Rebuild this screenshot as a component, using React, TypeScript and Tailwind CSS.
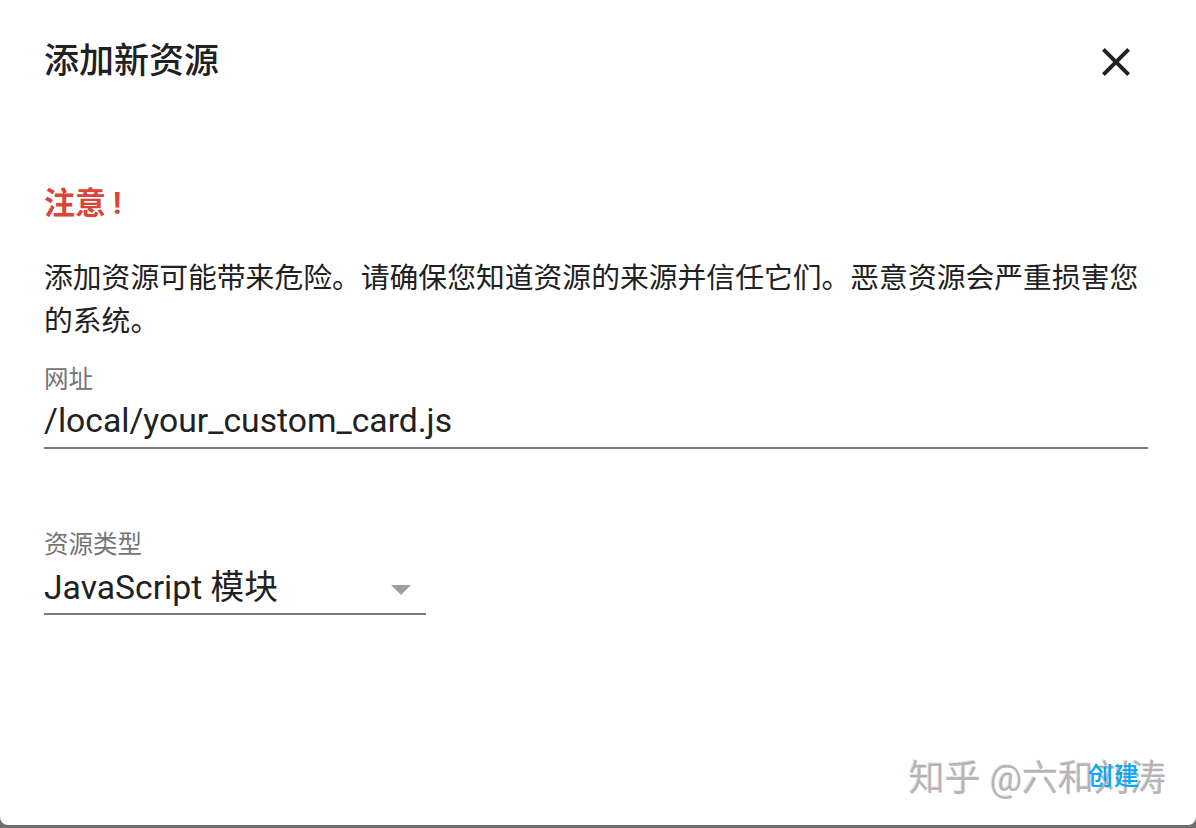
import React from 'react'

const FONT = 'font-[Roboto,"Noto_Sans_CJK_SC",sans-serif]'

function CloseIcon() {
  return (
    <svg width="48" height="48" viewBox="0 0 24 24" fill="#212121">
      <path d="M19 6.41L17.59 5 12 10.59 6.41 5 5 6.41 10.59 12 5 17.59 6.41 19 12 13.41 17.59 19 19 17.59 13.41 12z" />
    </svg>
  )
}

function TextField({ label, value }: { label: string; value: string }) {
  return (
    <div className="flex flex-col">
      <span className="text-[24.5px] leading-[26px] text-[#757575]">{label}</span>
      <div className="mt-[8px] border-b-2 border-[#7b7b7b] pb-[6px]">
        <span className="block text-[33.7px] leading-[40px] text-[#212121]">{value}</span>
      </div>
    </div>
  )
}

function SelectField({ label, value }: { label: string; value: string }) {
  return (
    <div className="flex w-[382px] flex-col">
      <span className="text-[24.5px] leading-[26px] text-[#757575]">{label}</span>
      <div className="mt-[10px] flex items-center justify-between border-b-2 border-[#7b7b7b] pb-[5px]">
        <span className="block text-[33.7px] leading-[40px] text-[#212121]">{value}</span>
        <svg width="20" height="10" viewBox="0 0 20 10" className="mr-[15px] mt-[4px]">
          <path d="M0 0h20L10 10z" fill="#9e9e9e" />
        </svg>
      </div>
    </div>
  )
}

export default function App() {
  return (
    <div className={`h-[828px] w-[1196px] bg-[#6e6e6e] ${FONT}`}>
      <div className="relative flex h-[825px] flex-col rounded-b-[8px] bg-white pl-[44px] pr-[48px]">
        {/* 标题栏 */}
        <div className="flex items-center justify-between pt-[38px]">
          <h2 className="text-[35px] font-medium leading-[48px] text-[#212121]">添加新资源</h2>
          <button className="mr-[8px] flex h-[48px] w-[48px] items-center justify-center">
            <CloseIcon />
          </button>
        </div>

        {/* 警告 */}
        <h3 className="mt-[96px] text-[31px] font-bold leading-[43px] text-[#db4437]">
          注意<span className="ml-[7px]">!</span>
        </h3>
        <p className="mt-[32px] text-[28.8px] leading-[43.2px] text-[#212121]">
          添加资源可能带来危险。请确保您知道资源的来源并信任它们。恶意资源会严重损害您的系统。
        </p>

        <div className="mt-[24px]">
          <TextField label="网址" value="/local/your_custom_card.js" />
        </div>

        <div className="mt-[83px]">
          <SelectField label="资源类型" value="JavaScript 模块" />
        </div>

        {/* 水印 */}
        <div className="pointer-events-none absolute bottom-[26px] right-[30px] text-[36px] leading-[40px] text-[#a3a3a3]/80 [text-shadow:1px_1px_0_#fff,-1px_-1px_0_#e5e5e5]">
          知乎 @六和刘涛
        </div>

        {/* 操作 */}
        <div className="mt-auto flex justify-end pb-[28px]">
          <button className="relative z-10 mr-[8px] text-[25.2px] font-medium leading-[40px] tracking-[1px] text-[#03a9f4]">
            创建
          </button>
        </div>
      </div>
    </div>
  )
}
